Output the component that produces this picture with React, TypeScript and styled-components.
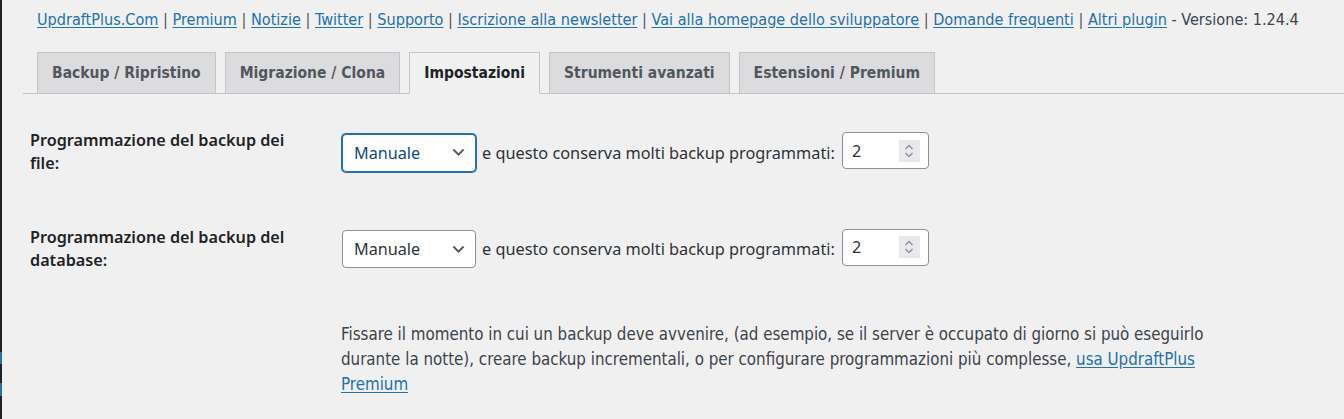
import React from "react";
import styled, { createGlobalStyle } from "styled-components";

const NARROW = `"Liberation Sans Narrow", "DejaVu Sans Condensed", "Roboto Condensed", Roboto, sans-serif`;
const SANS = `"Noto Sans", "Open Sans", sans-serif`;

const Global = createGlobalStyle`
  html, body { margin: 0; padding: 0; background: #f0f0f1; }
  body { width: 1344px; height: 419px; overflow: hidden; }
  * { box-sizing: border-box; }
`;

const Page = styled.div`
  display: flex;
  height: 419px;
  overflow: hidden;
`;

const AdminEdge = styled.div`
  flex: 0 0 2px;
  background: linear-gradient(
    to bottom,
    #1d2327 0 352px,
    #2271b1 352px 364px,
    #1d2327 364px 383px,
    #2271b1 383px 396px,
    #1d2327 396px
  );
`;

const Wrap = styled.div`
  flex: 1;
  min-width: 0;
  padding-left: 21px;
`;

const LinksLine = styled.div`
  margin: 0 0 0 14px;
  padding-top: 10px;
  height: 30px;
  line-height: 20px;
  font-family: ${NARROW};
  font-size: 16.1px;
  color: #3c434a;
  white-space: nowrap;
`;

const Link = styled.a`
  color: #2271b1;
  text-decoration: underline;
  text-underline-offset: 2px;
`;

const Sep = styled.span`
  color: #50575e;
`;

const TabBar = styled.nav`
  display: flex;
  align-items: flex-end;
  margin-top: 21px;
  padding-left: 14px;
  border-bottom: 1px solid #c3c4c7;
  height: 43px;
`;

const Tab = styled.a<{ $active?: boolean }>`
  display: flex;
  align-items: center;
  height: 42px;
  padding: 0 14px;
  margin-right: 9px;
  margin-bottom: -1px;
  border: 1px solid #c3c4c7;
  border-bottom: 1px solid ${(p) => (p.$active ? "#f0f0f1" : "#c3c4c7")};
  background: ${(p) => (p.$active ? "#f0f0f1" : "#dcdcde")};
  color: ${(p) => (p.$active ? "#1d2327" : "#50575e")};
  font-family: ${NARROW};
  font-weight: 600;
  font-size: 15.5px;
  text-decoration: none;
  white-space: nowrap;
`;

const Settings = styled.div`
  padding-top: 35px;
  padding-left: 7px;
`;

const Row = styled.div`
  display: grid;
  grid-template-columns: 312px 1fr;
  margin-bottom: 50.5px;
`;

const Label = styled.div`
  width: 272px;
  font-family: ${SANS};
  font-weight: 600;
  font-size: 16.2px;
  line-height: 23px;
  color: #1d2327;
`;

const Controls = styled.div`
  display: flex;
  align-items: center;
  gap: 6px;
  padding-top: 1.5px;
`;

const SelectBox = styled.div<{ $focused?: boolean }>`
  display: flex;
  align-items: center;
  justify-content: space-between;
  width: 134px;
  height: 38px;
  padding: 0 8px 0 11px;
  background: #fff;
  border: 1px solid ${(p) => (p.$focused ? "#2271b1" : "#8c8f94")};
  box-shadow: ${(p) => (p.$focused ? "0 0 0 1px #2271b1" : "none")};
  border-radius: 4px;
  font-family: ${SANS};
  font-size: 16.2px;
  color: ${(p) => (p.$focused ? "#0a4b78" : "#2c3338")};
`;

const InlineText = styled.span`
  font-family: ${SANS};
  font-size: 16.3px;
  color: #2c3338;
  white-space: nowrap;
`;

const NumberBox = styled.div`
  display: flex;
  align-items: center;
  width: 87px;
  height: 37px;
  margin-bottom: 4px;
  margin-left: 1px;
  padding: 0 8px 0 9px;
  background: #fff;
  border: 1px solid #8c8f94;
  border-radius: 4px;
`;

const NumberField = styled.input`
  flex: 1;
  min-width: 0;
  border: 0;
  outline: none;
  padding: 0;
  background: transparent;
  font-family: ${SANS};
  font-size: 16.2px;
  color: #2c3338;
`;

const Spinner = styled.span`
  display: flex;
  align-items: center;
  justify-content: center;
  width: 21px;
  height: 22px;
  background: #e9e9ed;
`;

const Description = styled.p`
  grid-column: 2;
  margin: 0;
  margin-left: -1px;
  max-width: 885px;
  font-family: ${NARROW};
  font-size: 16.8px;
  line-height: 25px;
  color: #3c434a;
`;

const Chevron = () => (
  <svg width="17" height="17" viewBox="0 0 20 20" aria-hidden="true">
    <path d="M5 6l5 5 5-5 2 1-7 7-7-7 2-1z" fill="#50575e" />
  </svg>
);

const SpinIcon = () => (
  <svg width="10" height="16" viewBox="0 0 10 16" aria-hidden="true">
    <path d="M1.5 6 L5 2.5 L8.5 6" fill="none" stroke="#8d8d93" strokeWidth="1.3" />
    <path d="M1.5 10 L5 13.5 L8.5 10" fill="none" stroke="#8d8d93" strokeWidth="1.3" />
  </svg>
);

const links = [
  "UpdraftPlus.Com",
  "Premium",
  "Notizie",
  "Twitter",
  "Supporto",
  "Iscrizione alla newsletter",
  "Vai alla homepage dello sviluppatore",
  "Domande frequenti",
  "Altri plugin",
];

const tabs = [
  "Backup / Ripristino",
  "Migrazione / Clona",
  "Impostazioni",
  "Strumenti avanzati",
  "Estensioni / Premium",
];

const ScheduleRow = ({ label, focused }: { label: string; focused?: boolean }) => (
  <Row>
    <Label>{label}</Label>
    <Controls>
      <SelectBox $focused={focused}>
        <span>Manuale</span>
        <Chevron />
      </SelectBox>
      <InlineText>e questo conserva molti backup programmati:</InlineText>
      <NumberBox>
        <NumberField type="text" defaultValue="2" />
        <Spinner>
          <SpinIcon />
        </Spinner>
      </NumberBox>
    </Controls>
  </Row>
);

export default function App() {
  return (
    <>
      <Global />
      <Page>
        <AdminEdge />
        <Wrap>
          <LinksLine>
            {links.map((l, i) => (
              <React.Fragment key={l}>
                {i > 0 && <Sep> | </Sep>}
                <Link href="#">{l}</Link>
              </React.Fragment>
            ))}
            {" - Versione: 1.24.4"}
          </LinksLine>
          <TabBar>
            {tabs.map((t) => (
              <Tab key={t} href="#" $active={t === "Impostazioni"}>
                {t}
              </Tab>
            ))}
          </TabBar>
          <Settings>
            <ScheduleRow label="Programmazione del backup dei file:" focused />
            <ScheduleRow label="Programmazione del backup del database:" />
            <Row>
              <Description>
                Fissare il momento in cui un backup deve avvenire, (ad esempio, se il server è occupato di
                giorno si può eseguirlo durante la notte), creare backup incrementali, o per configurare
                programmazioni più complesse, <Link href="#">usa UpdraftPlus Premium</Link>
              </Description>
            </Row>
          </Settings>
        </Wrap>
      </Page>
    </>
  );
}
